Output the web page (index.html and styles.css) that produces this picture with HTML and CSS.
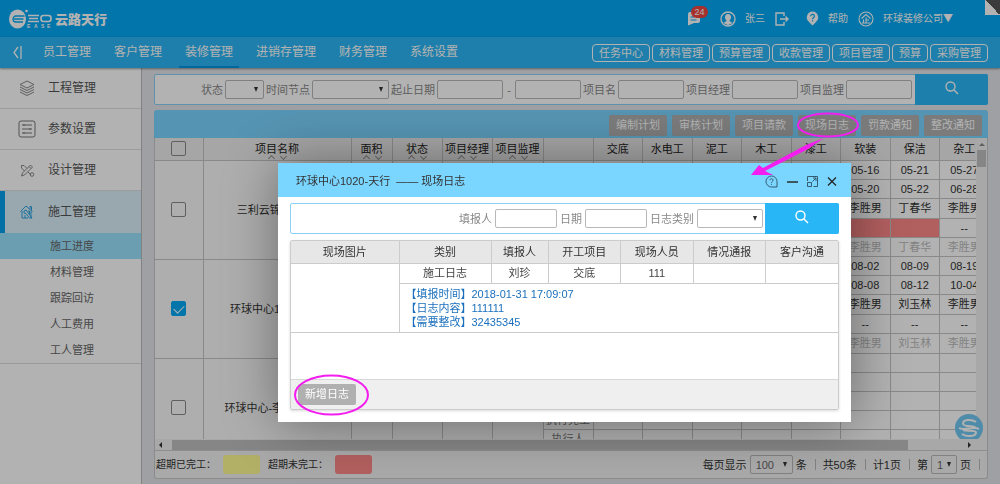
FILE: index.html
```html
<!DOCTYPE html>
<html lang="zh-CN">
<head>
<meta charset="utf-8">
<title>云路天行 - 施工进度</title>
<link rel="stylesheet" href="styles.css">
</head>
<body>
<div class="app">
  <header class="top">
    <div class="brand">
      <svg class="brand-mark" width="44" height="20" viewBox="0 0 44 20" aria-hidden="true">
        <ellipse cx="8.500" cy="10" rx="8.500" ry="9.500" fill="#fff"/>
        <path d="M15.500 7H7a3 3 0 0 0 0 6h7M5 10h9.500" fill="none" stroke="#03a9f4" stroke-width="1.300"/>
        <circle cx="17.500" cy="2" r="1.300" fill="#fff"/>
        <path d="M19 6.500h11M20 9.500h9M19 12.500h11" stroke="#fff" stroke-width="1.600"/>
        <rect x="32" y="6.500" width="10" height="6" rx="2.500" fill="none" stroke="#fff" stroke-width="1.600"/>
        <text x="18 25 32 38" y="18.500" class="brand-sub">EASE</text>
      </svg>
      <span class="brand-name">云路天行</span>
    </div>
    <div class="account">
      <button class="icon-btn msg" aria-label="消息">
        <svg width="14" height="15" viewBox="0 0 14 15"><path d="M3 1h8a2 2 0 0 1 2 2v7a2 2 0 0 1-2 2H7l-6 2.500V3a2 2 0 0 1 2-2z" fill="#fff"/><path d="M3.500 6h4M3.500 9h6" stroke="#03a9f4"/></svg>
        <span class="badge">24</span>
      </button>
      <a class="acc user" href="#"><svg width="16" height="16" viewBox="0 0 16 16"><circle cx="8" cy="8" r="7" fill="none" stroke="#fff" stroke-width="1.300"/><path d="M8 3c2 0 3 1.300 3 3.200 0 1.400-.6 2.300-1.300 2.900v1.200l2.800 1.400A7 7 0 0 1 8 14a7 7 0 0 1-4.500-2.300l2.800-1.400V9.100C5.600 8.500 5 7.600 5 6.200 5 4.300 6 3 8 3z" fill="#fff"/></svg><span>张三</span></a>
      <button class="icon-btn" aria-label="退出"><svg width="14" height="14" viewBox="0 0 14 14" fill="none" stroke="#fff" stroke-width="1.400"><path d="M9 4V1H1v12h8v-3M5 7h8M10.500 4.500L13 7l-2.500 2.500"/></svg></button>
      <a class="acc help" href="#"><svg width="13" height="15" viewBox="0 0 13 15"><path d="M6.500.5a6 6 0 0 1 3 11L6.500 14.500l-3-3a6 6 0 0 1 3-11z" fill="#fff"/><path d="M4.700 5.200c0-2.400 3.700-2.300 3.700 0 0 1.500-1.900 1.500-1.900 3M6.500 9.300v1.200" fill="none" stroke="#03a9f4" stroke-width="1.200"/></svg><span>帮助</span></a>
      <a class="acc company" href="#"><svg width="16" height="16" viewBox="0 0 16 16" fill="none" stroke="#fff" stroke-width="1.100"><circle cx="8" cy="8" r="7"/><path d="M3.500 7.500L8 3.500l4.500 4M8 6.500v5.500M8 9h3M5.500 8.500V12M3.800 12h8.400"/></svg><span>环球装修公司<span class="caret">▼</span></span></a>
    </div>
    <span class="fold"></span>
  </header>

  <nav class="nav">
    <button class="icon-btn collapse" aria-label="收起菜单"><svg width="9" height="13" viewBox="0 0 9 13" fill="none" stroke="#fff" stroke-width="1.300"><path d="M5 1L1 6.500 5 12M8 0v13"/></svg></button>
    <div class="nav-links">
      <a href="#">员工管理</a><a href="#">客户管理</a><a href="#" class="on">装修管理</a><a href="#">进销存管理</a><a href="#">财务管理</a><a href="#">系统设置</a>
    </div>
    <div class="shortcuts">
      <button>任务中心</button><button>材料管理</button><button>预算管理</button><button>收款管理</button><button>项目管理</button><button>预算</button><button>采购管理</button>
    </div>
  </nav>

  <div class="body">
    <aside class="side">
      <a class="item" href="#"><svg width="18" height="18" viewBox="0 0 18 18" fill="none" stroke="#888"><path d="M9 2l7 3.500L9 9 2 5.500zM2 8l7 3.500L16 8M2 10.500L9 14l7-3.500M2 13l7 3.500 7-3.500"/></svg>工程管理</a>
      <a class="item" href="#"><svg width="18" height="18" viewBox="0 0 18 18" fill="none" stroke="#777"><rect x="1" y="1" width="16" height="16" rx="2"/><path d="M4 5h10M4 9h10M4 13h10M6 4v2M12 8v2M6 12v2"/></svg>参数设置</a>
      <a class="item" href="#"><svg width="18" height="18" viewBox="0 0 18 18" fill="none" stroke="#888"><path d="M3.500 4.500h2.500l3 3M3.500 4.500V7l3 3M10 11l3 3M12.500 4l2 2-8 8-3 1 1-3zM11 5.500l2 2"/><circle cx="14" cy="13.500" r="1.800"/></svg>设计管理</a>
      <a class="item on" href="#"><svg width="18" height="18" viewBox="0 0 18 18" fill="none" stroke="#29a4e0"><path d="M2.500 8.500L8 3l6.500 5.500M4 8v7h3M13 8v7M12 6V3.500h1.500V7M6 8l2-1 1.500 2L14 15h-2.500L8 10.500 6 10zM7 12v3h3M10 8h1.500v3"/></svg>施工管理</a>
      <div class="subs">
        <a href="#" class="on">施工进度</a><a href="#">材料管理</a><a href="#">跟踪回访</a><a href="#">人工费用</a><a href="#">工人管理</a>
      </div>
    </aside>

    <main class="main">
      <form class="search">
        <div class="fields">
          <label for="st">状态</label><span class="sel w39"><select id="st"><option></option></select></span>
          <label for="nd">时间节点</label><span class="sel w77"><select id="nd"><option></option></select></span>
          <label for="d1">起止日期</label><input id="d1" class="w66" type="text"><span class="dash">-</span><input class="w66" type="text" aria-label="截止日期">
          <label for="pn">项目名</label><input id="pn" class="w66" type="text">
          <label for="pm">项目经理</label><input id="pm" class="w66" type="text">
          <label for="ps">项目监理</label><input id="ps" class="w66" type="text">
        </div>
        <button type="button" class="go" aria-label="搜索"><svg width="14" height="14" viewBox="0 0 14 14" fill="none" stroke="#fff" stroke-width="1.400"><circle cx="5.500" cy="5.500" r="4.500"/><path d="M9 9l4 4"/></svg></button>
      </form>

      <section class="panel">
        <div class="tools">
          <button>编制计划</button><button>审核计划</button><button>项目请款</button><button>现场日志</button><button>罚款通知</button><button>整改通知</button>
        </div>
        <div class="grid">
          <table class="left">
            <colgroup><col class="c-check"><col class="c-name"><col class="c-area"><col class="c-std"><col class="c-std"><col class="c-sup"></colgroup>
            <thead><tr>
              <th><input type="checkbox" aria-label="全选"></th>
              <th><span class="sort">项目名称</span></th><th><span class="sort">面积</span></th><th><span class="sort">状态</span></th><th><span class="sort">项目经理</span></th><th><span class="sort">项目监理</span></th>
            </tr></thead>
            <tbody>
              <tr><td><input type="checkbox" aria-label="选择三利云锦"></td><td>三利云锦-李胜男</td><td></td><td></td><td></td><td></td></tr>
              <tr><td><input type="checkbox" aria-label="选择环球中心1020" checked></td><td>环球中心1020-天行</td><td></td><td></td><td></td><td></td></tr>
              <tr><td><input type="checkbox" aria-label="选择环球中心"></td><td>环球中心-李胜男1020</td><td></td><td></td><td></td><td></td></tr>
            </tbody>
          </table>
          <div class="pane">
          <table class="right">
            <thead><tr><th></th><th>交底</th><th>水电工</th><th>泥工</th><th>木工</th><th>漆工</th><th>软装</th><th>保洁</th><th>杂工</th></tr></thead>
            <tbody>
              <tr><td></td><td></td><td></td><td></td><td></td><td></td><td>05-16</td><td>05-21</td><td>05-27</td></tr>
              <tr><td></td><td></td><td></td><td></td><td></td><td></td><td>05-20</td><td>05-22</td><td>06-28</td></tr>
              <tr class="tall"><td></td><td></td><td></td><td></td><td></td><td></td><td>李胜男</td><td>丁春华</td><td>李胜男</td></tr>
              <tr><td></td><td></td><td></td><td></td><td></td><td></td><td class="late"></td><td class="late"></td><td>--</td></tr>
              <tr class="mute"><td></td><td></td><td></td><td></td><td></td><td></td><td>李胜男</td><td>丁春华</td><td>李胜男</td></tr>
              <tr><td></td><td></td><td></td><td></td><td></td><td></td><td>08-02</td><td>08-09</td><td>08-19</td></tr>
              <tr><td></td><td></td><td></td><td></td><td></td><td></td><td>08-08</td><td>08-12</td><td>10-04</td></tr>
              <tr class="tall"><td></td><td></td><td></td><td></td><td></td><td></td><td>李胜男</td><td>刘玉林</td><td>李胜男</td></tr>
              <tr><td></td><td></td><td></td><td></td><td></td><td></td><td>--</td><td>--</td><td>--</td></tr>
              <tr class="tall mute"><td></td><td></td><td></td><td></td><td></td><td></td><td>李胜男</td><td>刘玉林</td><td>李胜男</td></tr>
              <tr><td></td><td></td><td></td><td></td><td></td><td></td><td></td><td></td><td></td></tr>
              <tr><td></td><td></td><td></td><td></td><td></td><td></td><td></td><td></td><td></td></tr>
              <tr><td></td><td></td><td></td><td></td><td></td><td></td><td></td><td></td><td></td></tr>
              <tr class="soft"><td>执行完工</td><td></td><td></td><td></td><td></td><td></td><td></td><td></td><td></td></tr>
              <tr class="soft"><td>执行人</td><td></td><td></td><td></td><td></td><td></td><td></td><td></td><td></td></tr>
            </tbody>
          </table>
          </div>
          <div class="vbar"><i class="tri up"></i><span></span></div>
          <button class="fab" aria-label="客服"><svg width="28" height="28" viewBox="0 0 28 28"><circle cx="14" cy="14" r="14" fill="#71c9f2"/><path d="M21 8c-4-3-13-3-13 1.500 0 4 12 2 12 4M4 14c5 3 15-2 20 1M7 20c4 3 14 3 14-1.500 0-3-9-1-13-2.500" fill="none" stroke="#fff" stroke-width="2"/></svg></button>
        </div>
        <div class="hbar"><i class="tri lt"></i><span></span><i class="tri rt"></i></div>
        <footer class="foot">
          <span class="legend">超期已完工：</span><i class="swatch yellow"></i>
          <span class="legend">超期未完工：</span><i class="swatch red"></i>
          <div class="pager">
            <label for="ps2">每页显示</label><span class="sel w43"><select id="ps2"><option>100</option></select></span><span class="seg">条</span>
            <span class="seg">共50条</span><span class="seg">计1页</span>
            <label for="pg">第</label><span class="sel w26"><select id="pg"><option>1</option></select></span><span class="seg">页</span>
          </div>
        </footer>
      </section>
    </main>
  </div>
</div>

<div class="shade"></div>

<div class="dialog" role="dialog" aria-labelledby="dlg-title">
  <div class="dlg-head">
    <span id="dlg-title">环球中心1020-天行&nbsp; —— 现场日志</span>
    <div class="dlg-ctl">
      <button class="icon-btn" aria-label="帮助"><svg width="13" height="13" viewBox="0 0 13 13" fill="none" stroke="#345b70"><path d="M12 12H6.500A5.500 5.500 0 1 1 12 6.500zM5 5.200c0-2 3-2 3 0 0 1.300-1.500 1.200-1.500 2.500M6.500 8.800v1"/></svg></button>
      <button class="icon-btn" aria-label="最小化"><svg width="11" height="13" viewBox="0 0 11 13" stroke="#222" stroke-width="1.400"><path d="M0 7h11"/></svg></button>
      <button class="icon-btn" aria-label="最大化"><svg width="11" height="13" viewBox="0 0 11 13" fill="none" stroke="#345b70"><path d="M.5 6V1.500h10v10h-4M.5 7.500h4v4h-4zM5.500 6.500L9 3M6 3h3v3"/></svg></button>
      <button class="icon-btn" aria-label="关闭"><svg width="10" height="13" viewBox="0 0 10 13" stroke="#222" stroke-width="1.200"><path d="M1 2.500l8 8M9 2.500l-8 8"/></svg></button>
    </div>
  </div>
  <div class="dlg-body">
    <form class="search">
      <div class="fields">
        <label for="rp">填报人</label><input id="rp" class="w62" type="text">
        <label for="rd">日期</label><input id="rd" class="w62" type="text">
        <label for="rt">日志类别</label><span class="sel w66"><select id="rt"><option></option></select></span>
      </div>
      <button type="button" class="go" aria-label="搜索"><svg width="14" height="14" viewBox="0 0 14 14" fill="none" stroke="#fff" stroke-width="1.400"><circle cx="5.500" cy="5.500" r="4.500"/><path d="M9 9l4 4"/></svg></button>
    </form>
    <div class="card">
      <table class="log">
        <colgroup><col class="l-pic"><col class="l-type"><col class="l-who"><col class="l-mid"><col class="l-mid"><col class="l-mid"><col class="l-mid"></colgroup>
        <thead><tr><th>现场图片</th><th>类别</th><th>填报人</th><th>开工项目</th><th>现场人员</th><th>情况通报</th><th>客户沟通</th></tr></thead>
        <tbody>
          <tr><td rowspan="2"></td><td>施工日志</td><td>刘珍</td><td>交底</td><td>111</td><td></td><td></td></tr>
          <tr><td colspan="6" class="detail"><p>【填报时间】2018-01-31 17:09:07</p><p>【日志内容】111111</p><p>【需要整改】32435345</p></td></tr>
        </tbody>
      </table>
      <div class="card-foot"><button>新增日志</button></div>
    </div>
  </div>
</div>

<svg class="marks" width="1000" height="484" viewBox="0 0 1000 484" aria-hidden="true">
  <g fill="none" stroke="#f41df0" stroke-width="2"><ellipse cx="828" cy="125" rx="30" ry="11.500"/><ellipse cx="331.500" cy="395" rx="36.500" ry="19.500"/></g>
  <path d="M751 175L759 165 763 168 806 145 824 138 808 149 765 171 773 175z" fill="#f41df0"/>
</svg>
</body>
</html>
```
FILE: styles.css
```css
* { box-sizing: border-box; }
body {
  margin: 0;
  font: 11px/16px "Liberation Sans", "Noto Sans CJK SC", sans-serif;
  color: #333;
  overflow: hidden;
}
button, input, select { font: inherit; color: inherit; margin: 0; }
button { border: 0; padding: 0; cursor: pointer; white-space: nowrap; }
a { color: inherit; text-decoration: none; }
svg { display: block; flex: none; }
table { border-collapse: collapse; table-layout: fixed; }
p { margin: 0; }
.icon-btn { background: none; position: relative; }

.app { height: 100vh; display: flex; flex-direction: column; background: #e3e5ea; }

/* top bar */
.top {
  position: relative;
  flex: none;
  height: 37px;
  display: flex;
  align-items: center;
  justify-content: space-between;
  padding: 0 47px 0 9px;
  background: #03a9f4;
  color: #fff;
  font-size: 10px;
}
.brand { display: flex; align-items: center; gap: 2px; }
.brand-sub { font: bold 5px "Liberation Sans", sans-serif; fill: #fff; }
.brand-name { font-size: 13px; font-weight: 900; padding-top: 3px; }
.account { display: flex; align-items: center; }
.acc { display: flex; align-items: center; gap: 9px; }
.user { margin: 0 10px 0 19px; }
.help { margin: 0 10px 0 17px; }
.caret { font-family: "Noto Sans CJK SC", sans-serif; }
.badge {
  position: absolute;
  left: 4px;
  top: -5px;
  width: 17px;
  border-radius: 6px;
  background: #f0453f;
  font-size: 9px;
  line-height: 12px;
}
.fold {
  position: absolute;
  right: 0;
  top: 0;
  width: 15px;
  height: 15px;
  background: linear-gradient(45deg, #fff 50%, #555 50%);
}

/* navigation */
.nav {
  position: relative;
  z-index: 1;
  flex: none;
  height: 31px;
  display: flex;
  align-items: center;
  padding: 0 12px 0 13px;
  background: #2bb7f6;
  color: #fff;
  box-shadow: 0 1px 2px rgba(0, 0, 0, .4);
}
.nav-links { display: flex; gap: 11px; margin-left: 15px; font-size: 12px; line-height: 27px; }
.nav-links a { padding: 2px 6px 0; border-bottom: 2px solid transparent; white-space: nowrap; }
.nav-links .on { border-color: #0094e6; }
.shortcuts { display: flex; gap: 2px; margin-left: auto; }
.shortcuts button {
  height: 18px;
  padding: 0 6px;
  border: 1px solid #fff;
  border-radius: 4px;
  background: none;
  line-height: 14px;
}

/* sidebar */
.body { flex: 1; min-height: 0; display: flex; }
.side { flex: none; width: 142px; background: #fff; border-right: 1px solid #bbb; }
.item {
  display: flex;
  align-items: center;
  gap: 12px;
  height: 41px;
  padding-left: 18px;
  border-bottom: 1px solid #e0e0e0;
  font-size: 12px;
  color: #555;
}
.item.on { height: 42px; padding-left: 13px; border-left: 5px solid #03a0ec; border-bottom: 0; background: #dcf0fa; }
.subs { border-bottom: 1px solid #ddd; color: #666; }
.subs a { display: block; height: 26px; padding-left: 50px; line-height: 26px; }
.subs .on { background: #9be3ff; }

/* main area */
.main { flex: 1; min-width: 0; display: flex; flex-direction: column; gap: 5px; padding: 6px 12px 5px 12px; }
.search {
  flex: none;
  display: flex;
  height: 31px;
  border: 1px solid #8cd0f5;
  border-radius: 2px;
  background: #fff;
  color: #888;
}
.fields { flex: 1; display: flex; align-items: center; justify-content: flex-end; gap: 2px; padding-right: 4px; white-space: nowrap; }
.dlg-body .fields { gap: 3px; padding-right: 3px; }
.go { width: 73px; margin: -1px; background: #29b6f6; display: flex; align-items: center; justify-content: center; padding-bottom: 4px; border-radius: 0 2px 2px 0; }
input[type=text], select {
  height: 19px;
  border: 1px solid #b8b8b8;
  border-radius: 2px;
  background: #fff;
  padding: 0 5px;
}
.sel { position: relative; display: flex; }
.sel select { width: 100%; appearance: none; }
.sel::after {
  content: "";
  position: absolute;
  right: 6px;
  top: 7px;
  border: solid transparent;
  border-width: 5px 2px 0;
  border-top-color: #333;
}
.dash { width: 8px; text-align: center; }
.w26 { width: 26px; }
.w39 { width: 39px; }
.w43 { width: 43px; }
.w62 { width: 62px; }
.w66 { width: 66px; }
.w77 { width: 77px; }

.panel { flex: 1; min-height: 0; display: flex; flex-direction: column; border: 1px solid #c8c8c8; border-top: 0; border-radius: 3px; background: #f2f2f2; }
.tools {
  flex: none;
  height: 28px;
  display: flex;
  align-items: center;
  justify-content: flex-end;
  gap: 5px;
  margin: 0 -1px;
  padding: 2px 6px 0;
  border-radius: 3px 3px 0 0;
  background: #7ad5ff;
}
.tools button, .card-foot button { width: 58px; height: 21px; border-radius: 2px; background: #b0b0b0; color: #fff; }

.grid { position: relative; flex: 1; min-height: 0; display: flex; overflow: hidden; background: #fafafa; }
.grid table { flex: none; text-align: center; }
.grid th { height: 22px; padding: 0; font-weight: 400; background: #eee; color: #222; }
.grid th, .grid td { border: 1px solid #c4c4c4; border-top: 0; border-left: 0; }
.left { width: 388px; }
.c-check { width: 48px; }
.c-name { width: 148px; }
.c-area { width: 41px; }
.c-std { width: 50px; }
.c-sup { width: 51px; }
.left td { height: 99px; padding: 0; white-space: nowrap; overflow: hidden; }
.sort { position: relative; }
.sort::before, .sort::after {
  content: "";
  position: absolute;
  top: 13px;
  left: calc(50% - 8px);
  width: 4px;
  height: 4px;
  border: solid #999;
  border-width: 1px 0 0 1px;
  transform: rotate(45deg);
}
.sort::after { top: 11px; left: calc(50% + 4px); transform: rotate(225deg); }
.grid input {
  display: block;
  appearance: none;
  width: 15px;
  height: 15px;
  margin: 0 auto;
  border: 1px solid #888;
  border-radius: 2px;
}
.grid input:checked { background: #03a9f4; border-color: #03a9f4; }
.grid input:checked::after {
  content: "";
  display: block;
  width: 9px;
  height: 5px;
  margin: 3px 2px;
  border: solid #fff;
  border-width: 0 0 1px 1px;
  transform: rotate(-45deg);
}
.pane { flex: 1; min-width: 0; overflow: hidden; background: #fff; }
.right { width: 446px; }
.right td { height: 19px; padding: 0; line-height: 16px; white-space: nowrap; }
.right .tall td { height: 20px; }
.right .late { background: #ff8888; }
.right .mute td { color: #bbb; }
.right .soft td { color: #777; }
.vbar { flex: none; width: 11px; background: #f1f1f1; display: flex; flex-direction: column; align-items: center; }
.vbar span { width: 9px; height: 17px; margin-top: 4px; background: #c1c1c1; }
.hbar { flex: none; height: 11px; display: flex; align-items: center; background: #f1f1f1; }
.hbar span { flex: 1; height: 10px; margin: 0 60px 0 10px; background: #c1c1c1; }
.tri { border: 3px solid transparent; }
.up { margin-top: 2px; border-bottom-color: #888; }
.lt { border-right-color: #333; border-left-width: 0; margin-left: 4px; }
.rt { border-left-color: #333; border-right-width: 0; margin-right: 16px; }
.fab { position: absolute; right: 4px; bottom: -3px; border-radius: 50%; background: none; }

.foot { flex: none; height: 28px; display: flex; align-items: center; padding: 0 7px 0 1px; border-top: 1px solid #ccc; white-space: nowrap; }
.legend { width: 67px; font-size: 10px; }
.swatch { width: 37px; height: 19px; margin-right: 8px; border-radius: 3px; }
.yellow { background: #fffb94; }
.red { background: #ff8888; }
.pager { display: flex; align-items: center; gap: 3px; margin-left: auto; }
.seg { display: flex; align-items: center; margin-right: 4px; }
.seg::after { content: ""; width: 1px; height: 11px; margin-left: 8px; background: #bbb; }
.seg:last-child { margin-right: 0; }
.w26 select, .w43 select { color: #666; background: #f2f2f2; }

/* dialog */
.shade { position: fixed; inset: 0; z-index: 10; background: rgba(0, 0, 0, .3); }
.dialog {
  position: absolute;
  z-index: 11;
  left: 278px;
  top: 163px;
  width: 573px;
  background: #fff;
  box-shadow: 1px 1px 50px rgba(0, 0, 0, .4);
}
.dlg-head { display: flex; align-items: center; justify-content: space-between; height: 34px; padding: 2px 14px 0 18px; background: #7ad5ff; }
.dlg-ctl { display: flex; gap: 9px; }
.dlg-body { display: flex; flex-direction: column; gap: 6px; padding: 6px 12px 12px; }
.dlg-body .go { width: 74px; }
.card { border: 1px solid #ccc; border-radius: 2px; box-shadow: 0 1px 3px rgba(0, 0, 0, .15); }
.log { width: 100%; margin-bottom: 46px; text-align: center; }
.log th { height: 22px; padding: 0; font-weight: 400; background: #e7e7e7; }
.log td { height: 20px; padding: 0; color: #444; }
.log th, .log td { border: 1px solid #ccc; border-width: 0 1px 1px 0; }
.log tr > :last-child { border-right: 0; }
.l-pic { width: 108px; }
.l-type { width: 92px; }
.l-who { width: 57px; }
.log .detail { padding: 3px 6px; text-align: left; line-height: 14px; color: #1b70bd; }
.card-foot { height: 30px; padding: 4px 7px; border-top: 1px solid #d8d8d8; background: #efefef; }
.marks { position: absolute; z-index: 12; left: 0; top: 0; pointer-events: none; }
```
